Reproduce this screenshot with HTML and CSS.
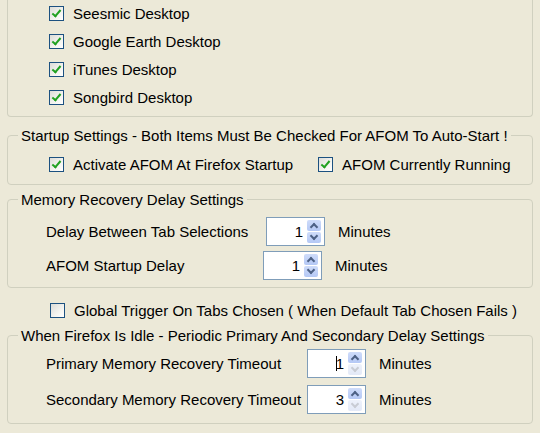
FILE: index.html
```html
<!DOCTYPE html>
<html lang="en">
<head>
    <meta charset="UTF-8">
    <title>AFOM Options</title>
    <link rel="stylesheet" href="styles.css">
</head>
<body>

    <div class="group group-top">
        <div class="check-row"><span class="box checked"></span><span>Seesmic Desktop</span></div>
        <div class="check-row"><span class="box checked"></span><span>Google Earth Desktop</span></div>
        <div class="check-row"><span class="box checked"></span><span>iTunes Desktop</span></div>
        <div class="check-row"><span class="box checked"></span><span>Songbird Desktop</span></div>
    </div>

    <fieldset class="group startup">
        <legend>Startup Settings - Both Items Must Be Checked For AFOM To Auto-Start !</legend>
        <div class="check-line">
            <div class="check-row"><span class="box checked"></span><span>Activate AFOM At Firefox Startup</span></div>
            <div class="check-row"><span class="box checked"></span><span>AFOM Currently Running</span></div>
        </div>
    </fieldset>

    <fieldset class="group memory">
        <legend>Memory Recovery Delay Settings</legend>
        <div class="spin-row">
            <span class="label label-tab">Delay Between Tab Selections</span>
            <div class="spin"><span class="value">1</span><span class="arrows"><span class="up"></span><span class="down"></span></span></div>
            <span class="unit">Minutes</span>
        </div>
        <div class="spin-row second">
            <span class="label label-start">AFOM Startup Delay</span>
            <div class="spin"><span class="value">1</span><span class="arrows"><span class="up"></span><span class="down"></span></span></div>
            <span class="unit">Minutes</span>
        </div>
    </fieldset>

    <div class="check-row global"><span class="box"></span><span>Global Trigger On Tabs Chosen ( When Default Tab Chosen Fails )</span></div>

    <fieldset class="group idle">
        <legend>When Firefox Is Idle - Periodic Primary And Secondary Delay Settings</legend>
        <div class="spin-row">
            <span class="label label-idle">Primary Memory Recovery Timeout</span>
            <div class="spin"><span class="value"><span class="caret"></span>1</span><span class="arrows"><span class="up"></span><span class="down off"></span></span></div>
            <span class="unit">Minutes</span>
        </div>
        <div class="spin-row second">
            <span class="label label-idle">Secondary Memory Recovery Timeout</span>
            <div class="spin"><span class="value">3</span><span class="arrows"><span class="up"></span><span class="down off"></span></span></div>
            <span class="unit">Minutes</span>
        </div>
    </fieldset>

</body>
</html>
```

FILE: styles.css
```css
body {
    font-family: 'Liberation Sans', Arial, sans-serif;
    font-size: 15px;
    color: #000;
    background-color: #ece9d8;
    margin: 0;
    padding: 0;
}
.group {
    margin: 0 7px;
    border: 1px solid #d0d0bf;
    border-radius: 4px;
    padding: 0;
    min-width: 0;
}
.group legend {
    margin-left: 10px;
    padding: 0 3px;
    line-height: 17px;
}
.group-top {
    border-top: none;
    border-radius: 0 0 4px 4px;
    padding-bottom: 5px;
}
.group-top .check-row {
    height: 28px;
}
.group-top .check-row:first-child {
    margin-top: -1px;
}
.check-row {
    display: flex;
    align-items: center;
    gap: 9px;
    height: 20px;
    padding-left: 41px;
}
.box {
    width: 13px;
    height: 13px;
    border: 1px solid #1c5180;
    background: linear-gradient(135deg, #dcdcd7 0%, #f4f4f0 60%, #ffffff 100%);
    position: relative;
}
.box.checked::after {
    content: "";
    position: absolute;
    left: 4px;
    top: 1px;
    width: 3px;
    height: 7px;
    border: solid #21a121;
    border-width: 0 2px 2px 0;
    transform: rotate(40deg);
}
.startup {
    margin-top: 10px;
    padding: 10px 0 10px;
}
.check-line {
    display: flex;
    gap: 25px;
}
.check-line .check-row {
    padding-left: 0;
}
.check-line .check-row:first-child {
    padding-left: 41px;
}
.memory {
    margin-top: 6px;
    padding: 9px 0 7px;
}
.spin-row {
    display: flex;
    align-items: center;
    padding-left: 38px;
    height: 29px;
}
.spin-row.second {
    margin-top: 5px;
}
.label-tab {
    width: 220px;
}
.label-start {
    width: 217px;
}
.label-idle {
    width: 261px;
}
.spin {
    width: 54px;
    height: 27px;
    border: 1px solid #7f9db9;
    background-color: #fff;
    display: flex;
    align-items: center;
    justify-content: flex-end;
    padding-right: 3px;
    gap: 4px;
}
.value {
    display: flex;
    align-items: center;
}
.caret {
    width: 1px;
    height: 15px;
    background-color: #000;
    margin-right: -1px;
}
.arrows {
    display: flex;
    flex-direction: column;
    width: 14px;
    gap: 1px;
}
.arrows span {
    height: 11px;
    border-radius: 2px;
    background: linear-gradient(#cfdcfa, #b4c8f5);
    position: relative;
}
.arrows span::after {
    content: "";
    position: absolute;
    left: 4px;
    width: 4px;
    height: 4px;
    border: solid #4d6185;
    border-width: 2px 0 0 2px;
}
.arrows .up::after {
    top: 4px;
    transform: rotate(45deg);
}
.arrows .down::after {
    top: 1px;
    transform: rotate(225deg);
}
.arrows .down.off {
    background: linear-gradient(#eef2fb, #e3e9f7);
}
.arrows .down.off::after {
    border-color: #c9ccd4;
}
.unit {
    margin-left: 13px;
}
.global {
    margin-top: 12px;
    padding-left: 50px;
}
.idle {
    margin-top: 7px;
    padding: 5px 0 9px;
}
.idle .spin-row.second {
    margin-top: 7px;
}
```
